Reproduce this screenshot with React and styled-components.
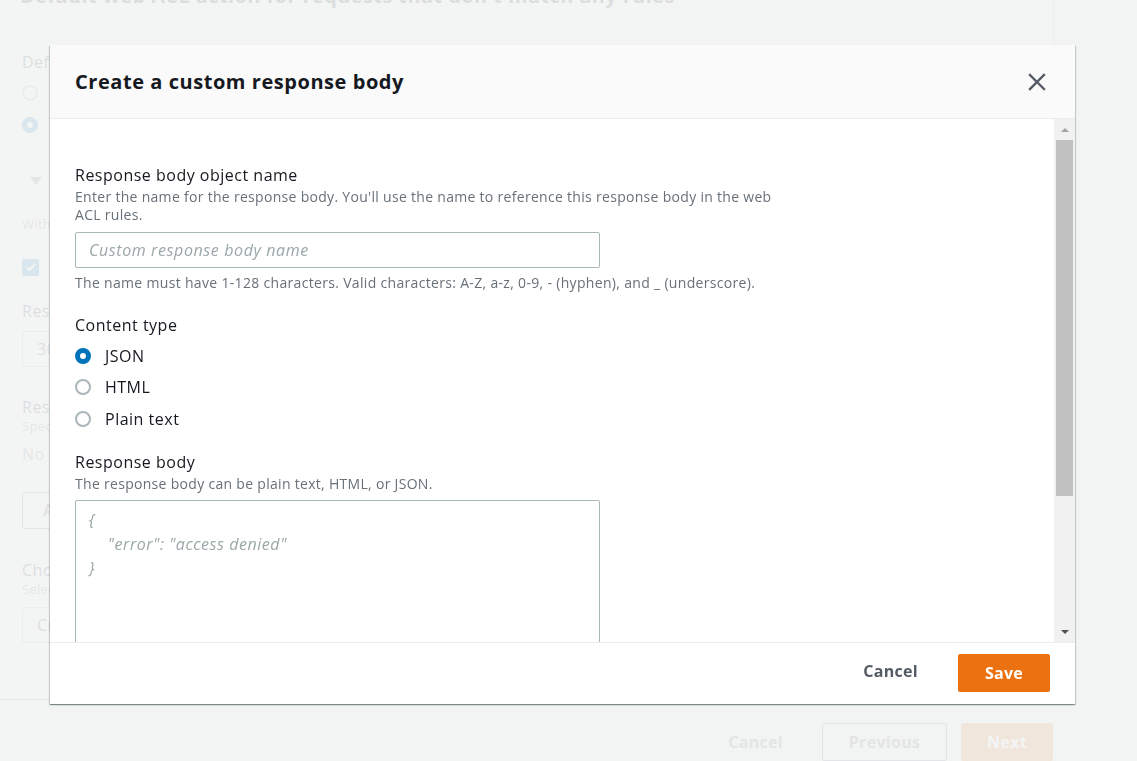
import React from 'react';
import styled, { createGlobalStyle } from 'styled-components';

const GlobalStyle = createGlobalStyle`
  html, body {
    margin: 0;
    padding: 0;
  }
  body {
    background: #f2f3f3;
    font-family: "Open Sans", "Liberation Sans", sans-serif;
    color: #16191f;
    overflow: hidden;
  }
  * {
    box-sizing: border-box;
  }
`;

const App = () => {
  return (
    <>
      <GlobalStyle />
      <Page>
        <BgCard>
          <BgHeader>
            <BgHeading>Default web ACL action for requests that don't match any rules</BgHeading>
          </BgHeader>
          <BgBody>
            <BgLabel>Default action</BgLabel>
            <BgChoice $top={4}>
              <BgRadio />
              Allow
            </BgChoice>
            <BgChoice>
              <BgRadio checked />
              Block
            </BgChoice>
            <BgExpander>
              <BgCaret />
              Custom response - optional
            </BgExpander>
            <BgSmall>With the Block action, you can send a custom response to the web request.</BgSmall>
            <BgChoice $top={18}>
              <BgCheck>
                <svg width="12" height="12" viewBox="0 0 12 12">
                  <path d="M2 6.5l2.5 2.5L10 3" stroke="#fff" strokeWidth="2" fill="none" />
                </svg>
              </BgCheck>
              Enable
            </BgChoice>
            <BgLabel $top={17}>Response code</BgLabel>
            <BgInput $top={9}>301</BgInput>
            <BgLabel $top={29}>Response headers - optional</BgLabel>
            <BgSmall>Specify the response headers that AWS WAF adds to the response.</BgSmall>
            <BgText>No custom headers defined.</BgText>
            <BgButton>Add new custom header</BgButton>
            <BgLabel $top={30}>Choose how you would like to specify the response body - optional</BgLabel>
            <BgSmall>Select an existing custom response body or create a new one.</BgSmall>
            <BgInput $top={9}>Create a custom response body</BgInput>
          </BgBody>
        </BgCard>
        <BgActions>
          <BgLinkButton>Cancel</BgLinkButton>
          <BgOutlineButton>Previous</BgOutlineButton>
          <BgPrimaryButton>Next</BgPrimaryButton>
        </BgActions>
      </Page>

      <Overlay>
        <Modal>
          <ModalHeader>
            <ModalTitle>Create a custom response body</ModalTitle>
            <CloseButton aria-label="Close">
              <svg width="18" height="18" viewBox="0 0 18 18">
                <path d="M2 2L16 16M16 2L2 16" stroke="#545b64" strokeWidth="2.4" strokeLinecap="square" />
              </svg>
            </CloseButton>
          </ModalHeader>

          <ModalBody>
            <Form>
              <Field>
                <Label>Response body object name</Label>
                <Description>
                  Enter the name for the response body. You'll use the name to reference this response body in the web ACL rules.
                </Description>
                <TextInput placeholder="Custom response body name" />
                <Hint>
                  The name must have 1-128 characters. Valid characters: A-Z, a-z, 0-9, - (hyphen), and _ (underscore).
                </Hint>
              </Field>

              <Field $gap={22}>
                <Label>Content type</Label>
                <RadioGroup>
                  <RadioRow>
                    <Radio checked />
                    JSON
                  </RadioRow>
                  <RadioRow>
                    <Radio />
                    HTML
                  </RadioRow>
                  <RadioRow>
                    <Radio />
                    Plain text
                  </RadioRow>
                </RadioGroup>
              </Field>

              <Field $gap={16}>
                <Label>Response body</Label>
                <Description>The response body can be plain text, HTML, or JSON.</Description>
                <TextArea placeholder={'{\n    "error": "access denied"\n}'} />
              </Field>
            </Form>

            <ScrollTrack>
              <ScrollArrow />
              <ScrollThumb />
              <ScrollArrow $down />
            </ScrollTrack>
          </ModalBody>

          <ModalFooter>
            <TextButton>Cancel</TextButton>
            <PrimaryButton>Save</PrimaryButton>
          </ModalFooter>
        </Modal>
      </Overlay>
    </>
  );
};

export default App;

/* ---------- page behind the modal ---------- */

const Page = styled.div`
  width: 1137px;
  height: 761px;
  overflow: hidden;
`;

const BgCard = styled.div`
  width: 1053px;
  margin-top: -16px;
  background: #fff;
  box-shadow: 0 1px 1px 0 rgba(0, 28, 36, 0.3), 1px 1px 1px 0 rgba(0, 28, 36, 0.15);
`;

const BgHeader = styled.div`
  padding: 0 20px 21px;
  border-bottom: 1px solid #eaeded;
`;

const BgHeading = styled.h2`
  margin: 0;
  font-size: 20px;
  line-height: 24px;
  font-weight: 700;
  letter-spacing: 0.4px;
  color: #16191f;
  white-space: nowrap;
`;

const BgBody = styled.div`
  padding: 21px 22px 0;
  height: 669px;
`;

const BgLabel = styled.div`
  margin-top: ${p => p.$top || 0}px;
  font-size: 16px;
  line-height: 22px;
  letter-spacing: 0.5px;
  color: #16191f;
  white-space: nowrap;
`;

const BgSmall = styled.div`
  font-size: 13px;
  line-height: 17px;
  letter-spacing: 0.3px;
  color: #687078;
  white-space: nowrap;
`;

const BgText = styled.div`
  margin-top: 8px;
  font-size: 16px;
  line-height: 22px;
  letter-spacing: 0.5px;
  color: #687078;
`;

const BgChoice = styled.div`
  display: flex;
  align-items: center;
  gap: 14px;
  height: 32px;
  margin-top: ${p => p.$top || 0}px;
  font-size: 16px;
  letter-spacing: 0.5px;
`;

const BgRadio = styled.span`
  width: 16px;
  height: 16px;
  border-radius: 50%;
  border: ${p => (p.checked ? '5px solid #0073bb' : '2px solid #aab7b8')};
  background: #fff;
`;

const BgCheck = styled.span`
  display: flex;
  align-items: center;
  justify-content: center;
  width: 17px;
  height: 17px;
  border-radius: 2px;
  background: #0073bb;
`;

const BgExpander = styled.div`
  display: flex;
  align-items: center;
  gap: 12px;
  margin: 23px 0 17px;
  padding: 6px 0 6px 8px;
  border-bottom: 1px solid #eaeded;
  font-size: 16px;
  font-weight: 700;
  line-height: 22px;
  letter-spacing: 0.4px;
`;

const BgCaret = styled.span`
  width: 0;
  height: 0;
  border-left: 6px solid transparent;
  border-right: 6px solid transparent;
  border-top: 8px solid #545b64;
`;

const BgInput = styled.div`
  width: 520px;
  height: 36px;
  margin-top: ${p => p.$top || 0}px;
  padding: 0 14px;
  border: 1px solid #aab7b8;
  border-radius: 2px;
  font-size: 16px;
  line-height: 34px;
  letter-spacing: 0.5px;
  color: #16191f;
`;

const BgButton = styled.div`
  display: inline-block;
  margin-top: 27px;
  height: 37px;
  padding: 0 20px;
  border: 1px solid #545b64;
  border-radius: 2px;
  font-size: 16px;
  font-weight: 700;
  line-height: 35px;
  color: #545b64;
`;

const BgActions = styled.div`
  display: flex;
  justify-content: flex-end;
  align-items: center;
  gap: 14px;
  width: 1053px;
  margin-top: 24px;
`;

const BgLinkButton = styled.div`
  padding: 0 25px 0 20px;
  font-size: 16px;
  font-weight: 700;
  line-height: 38px;
  letter-spacing: 0.3px;
  color: #545b64;
`;

const BgOutlineButton = styled.div`
  width: 125px;
  height: 38px;
  border: 1px solid #545b64;
  border-radius: 2px;
  text-align: center;
  font-size: 16px;
  font-weight: 700;
  line-height: 36px;
  letter-spacing: 0.3px;
  color: #545b64;
`;

const BgPrimaryButton = styled.div`
  width: 92px;
  height: 38px;
  border-radius: 2px;
  background: #ec7211;
  text-align: center;
  font-size: 16px;
  font-weight: 700;
  line-height: 38px;
  letter-spacing: 0.3px;
  color: #fff;
`;

/* ---------- modal ---------- */

const Overlay = styled.div`
  position: fixed;
  inset: 0;
  padding: 45px 0 0 50px;
  background: rgba(242, 243, 243, 0.9);
`;

const Modal = styled.div`
  display: flex;
  flex-direction: column;
  width: 1025px;
  height: 659px;
  background: #fff;
  box-shadow: 0 1px 1px 0 rgba(0, 28, 36, 0.3), 1px 1px 1px 0 rgba(0, 28, 36, 0.15),
    -1px 1px 1px 0 rgba(0, 28, 36, 0.15);
`;

const ModalHeader = styled.div`
  display: flex;
  align-items: center;
  justify-content: space-between;
  flex: 0 0 74px;
  padding: 0 29px 0 25px;
  background: #fafafa;
  border-bottom: 1px solid #eaeded;
`;

const ModalTitle = styled.h2`
  margin: 0;
  font-size: 20px;
  line-height: 26px;
  font-weight: 700;
  letter-spacing: 0.55px;
  color: #16191f;
`;

const CloseButton = styled.button`
  display: flex;
  padding: 0;
  border: none;
  background: none;
  cursor: pointer;
`;

const ModalBody = styled.div`
  display: flex;
  flex: 0 0 523px;
  overflow: hidden;
`;

const Form = styled.div`
  flex: 1;
  display: flex;
  flex-direction: column;
  padding: 45px 25px 30px;
`;

const Field = styled.div`
  display: flex;
  flex-direction: column;
  align-items: flex-start;
  margin-top: ${p => p.$gap || 0}px;
`;

const Label = styled.label`
  font-size: 16px;
  line-height: 22px;
  letter-spacing: 0.5px;
  color: #16191f;
`;

const Description = styled.div`
  max-width: 700px;
  margin-top: 2px;
  font-size: 14px;
  line-height: 18px;
  letter-spacing: 0.3px;
  color: #687078;
`;

const TextInput = styled.input`
  width: 525px;
  height: 36px;
  margin-top: 8px;
  padding: 0 13px;
  border: 1px solid #aab7b8;
  border-radius: 2px;
  font-family: inherit;
  font-size: 16px;
  letter-spacing: 0.6px;
  color: #16191f;
  outline: none;

  &::placeholder {
    color: #9ba7a8;
    font-style: italic;
  }
`;

const Hint = styled.div`
  margin-top: 6px;
  font-size: 14px;
  line-height: 18px;
  letter-spacing: 0.32px;
  color: #687078;
  white-space: nowrap;
`;

const RadioGroup = styled.div`
  display: flex;
  flex-direction: column;
  margin-top: 4px;
`;

const RadioRow = styled.label`
  display: flex;
  align-items: center;
  gap: 14px;
  height: 31.5px;
  font-size: 16px;
  letter-spacing: 0.5px;
  color: #16191f;
`;

const Radio = styled.span`
  width: 16px;
  height: 16px;
  border-radius: 50%;
  background: #fff;
  border: ${p => (p.checked ? '5px solid #0073bb' : '2px solid #aab7b8')};
`;

const TextArea = styled.textarea`
  width: 525px;
  height: 300px;
  margin-top: 7px;
  padding: 7px 13px;
  border: 1px solid #aab7b8;
  border-radius: 2px;
  font-family: inherit;
  font-size: 16px;
  line-height: 24px;
  letter-spacing: 0.55px;
  resize: none;
  outline: none;

  &::placeholder {
    color: #9ba7a8;
    font-style: italic;
  }
`;

const ScrollTrack = styled.div`
  display: flex;
  flex-direction: column;
  flex: 0 0 21px;
  padding: 0 2px;
  background: #f1f1f1;
`;

const ScrollArrow = styled.div`
  display: flex;
  align-items: center;
  justify-content: center;
  height: 21px;
  margin-top: ${p => (p.$down ? 'auto' : '0')};

  &::before {
    content: '';
    width: 0;
    height: 0;
    border-left: 4.5px solid transparent;
    border-right: 4.5px solid transparent;
    ${p =>
      p.$down ? 'border-top: 4.5px solid #505050;' : 'border-bottom: 4.5px solid #a3a3a3;'}
  }
`;

const ScrollThumb = styled.div`
  height: 356px;
  background: #c1c1c1;
`;

const ModalFooter = styled.div`
  display: flex;
  justify-content: flex-end;
  align-items: center;
  gap: 20px;
  flex: 1;
  padding: 0 25px 2px;
  border-top: 1px solid #eaeded;
`;

const TextButton = styled.button`
  padding: 0 20px 3px;
  height: 38px;
  border: none;
  background: none;
  font-family: inherit;
  font-size: 16px;
  font-weight: 700;
  letter-spacing: 0.3px;
  color: #545b64;
  cursor: pointer;
`;

const PrimaryButton = styled.button`
  width: 92px;
  height: 38px;
  border: none;
  border-radius: 2px;
  background: #ec7211;
  font-family: inherit;
  font-size: 16px;
  font-weight: 700;
  letter-spacing: 0.3px;
  color: #fff;
  cursor: pointer;
`;
